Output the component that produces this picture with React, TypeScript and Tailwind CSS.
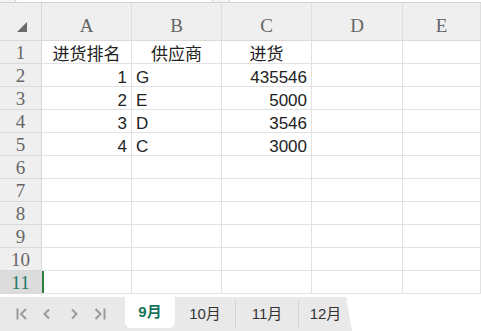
import React from "react";

type Cell = { text: string; align: "left" | "center" | "right" };

const colWidths = ["w-[90px]", "w-[90px]", "w-[90px]", "w-[91px]", "flex-1"];
const colNames = ["A", "B", "C", "D", "E"];

const data: Cell[][] = [
  [
    { text: "进货排名", align: "center" },
    { text: "供应商", align: "center" },
    { text: "进货", align: "center" },
  ],
  [
    { text: "1", align: "right" },
    { text: "G", align: "left" },
    { text: "435546", align: "right" },
  ],
  [
    { text: "2", align: "right" },
    { text: "E", align: "left" },
    { text: "5000", align: "right" },
  ],
  [
    { text: "3", align: "right" },
    { text: "D", align: "left" },
    { text: "3546", align: "right" },
  ],
  [
    { text: "4", align: "right" },
    { text: "C", align: "left" },
    { text: "3000", align: "right" },
  ],
];

const alignClass = {
  left: "justify-start pl-[4px]",
  center: "justify-center",
  right: "justify-end pr-[4px]",
};

const serif = "font-['Liberation_Serif',serif]";
const cellFont = "font-['Liberation_Sans','Noto_Sans_CJK_SC',sans-serif]";

const NavIcon = ({ kind }: { kind: "first" | "prev" | "next" | "last" }) => (
  <svg width="12" height="12" viewBox="0 0 12 12" fill="none" stroke="#9a9a9a" strokeWidth="2">
    {kind === "first" && (
      <>
        <line x1="1.5" y1="0.5" x2="1.5" y2="11.5" />
        <polyline points="10,1 5,6 10,11" />
      </>
    )}
    {kind === "prev" && <polyline points="8,1.5 3.5,6 8,10.5" />}
    {kind === "next" && <polyline points="4,1.5 8.5,6 4,10.5" />}
    {kind === "last" && (
      <>
        <polyline points="1.5,1 6.5,6 1.5,11" />
        <line x1="10.5" y1="0.5" x2="10.5" y2="11.5" />
      </>
    )}
  </svg>
);

const App = () => {
  const rows = Array.from({ length: 11 }, (_, i) => i + 1);

  return (
    <div className="w-[481px] h-[331px] overflow-hidden bg-white flex flex-col">
      {/* top strip with the bottoms of the formula boxes */}
      <div className="h-[3px] shrink-0 flex bg-[#f3f3f3] border-b border-[#d2d2d2]">
        <div className="ml-[15px] w-[198px] bg-white border-x border-[#c9c9c9] rounded-b-[3px]" />
        <div className="ml-[16px] flex-1 bg-white border-l border-[#c9c9c9] rounded-bl-[3px]" />
      </div>

      {/* column header */}
      <div className="h-[38px] shrink-0 flex bg-[#efefef] border-b border-[#d9d9d9]">
        <div className="w-[42px] shrink-0 border-r border-[#d9d9d9] relative">
          <svg className="absolute left-[17px] top-[19px]" width="10" height="10" viewBox="0 0 10 10">
            <polygon points="10,0 10,10 0,10" fill="#6b6b6b" />
          </svg>
        </div>
        {colNames.map((c, i) => (
          <div
            key={c}
            className={`${colWidths[i]} shrink-0 border-r border-[#dedede] flex items-end justify-center pb-[5px] text-[19px] leading-none text-[#666] ${serif}`}
          >
            {c}
          </div>
        ))}
      </div>

      {/* rows */}
      {rows.map((r) => {
        const selected = r === 11;
        const cells = data[r - 1];
        return (
          <div key={r} className="h-[23px] shrink-0 flex">
            <div
              className={`w-[42px] shrink-0 border-r border-b border-[#d9d9d9] flex items-end justify-center pb-[1px] text-[19px] leading-none ${serif} ${
                selected ? "bg-[#dcdcdc] text-[#1d7a66]" : "bg-[#efefef] text-[#666]"
              }`}
            >
              {r}
            </div>
            {colWidths.map((w, ci) => {
              const cell = cells ? cells[ci] : undefined;
              return (
                <div
                  key={ci}
                  className={`${w} shrink-0 border-r border-b border-[#e2e2e2] flex items-end text-[17px] leading-none text-[#222] ${cellFont} ${
                    cell ? alignClass[cell.align] : ""
                  }`}
                >
                  {selected && ci === 0 && <span className="w-[2px] h-full bg-[#2f7d3c]" />}
                  {cell?.text}
                </div>
              );
            })}
          </div>
        );
      })}

      <div className="h-[3px] shrink-0" />

      {/* sheet tabs */}
      <div className="h-[34px] shrink-0 flex">
        <div className="w-[352px] flex bg-[#e9e9e9] [clip-path:polygon(0_0,346px_0,352px_100%,0_100%)]">
          <div className="w-[125px] flex items-center pl-[16px] gap-[13px]">
            <NavIcon kind="first" />
            <NavIcon kind="prev" />
            <span className="ml-[2px]">
              <NavIcon kind="next" />
            </span>
            <span className="ml-[1px]">
              <NavIcon kind="last" />
            </span>
          </div>
          <div className="w-[50px] h-[31px] bg-white rounded-b-[6px] flex items-center justify-center text-[15px] font-bold text-[#17735c] font-['Liberation_Sans','Noto_Sans_CJK_SC',sans-serif]">
            9月
          </div>
          {["10月", "11月", "12月"].map((t, i) => (
            <div
              key={t}
              className={`${["w-[60px]", "w-[63px]", "w-[54px]"][i]} ${
                i > 0 ? "border-l border-[#d4d4d4]" : ""
              } my-[3px] flex items-center justify-center text-[15px] text-[#333] font-['Liberation_Sans','Noto_Sans_CJK_SC',sans-serif]`}
            >
              {t}
            </div>
          ))}
        </div>
        <div className="flex-1 bg-white" />
      </div>
    </div>
  );
};

export default App;
